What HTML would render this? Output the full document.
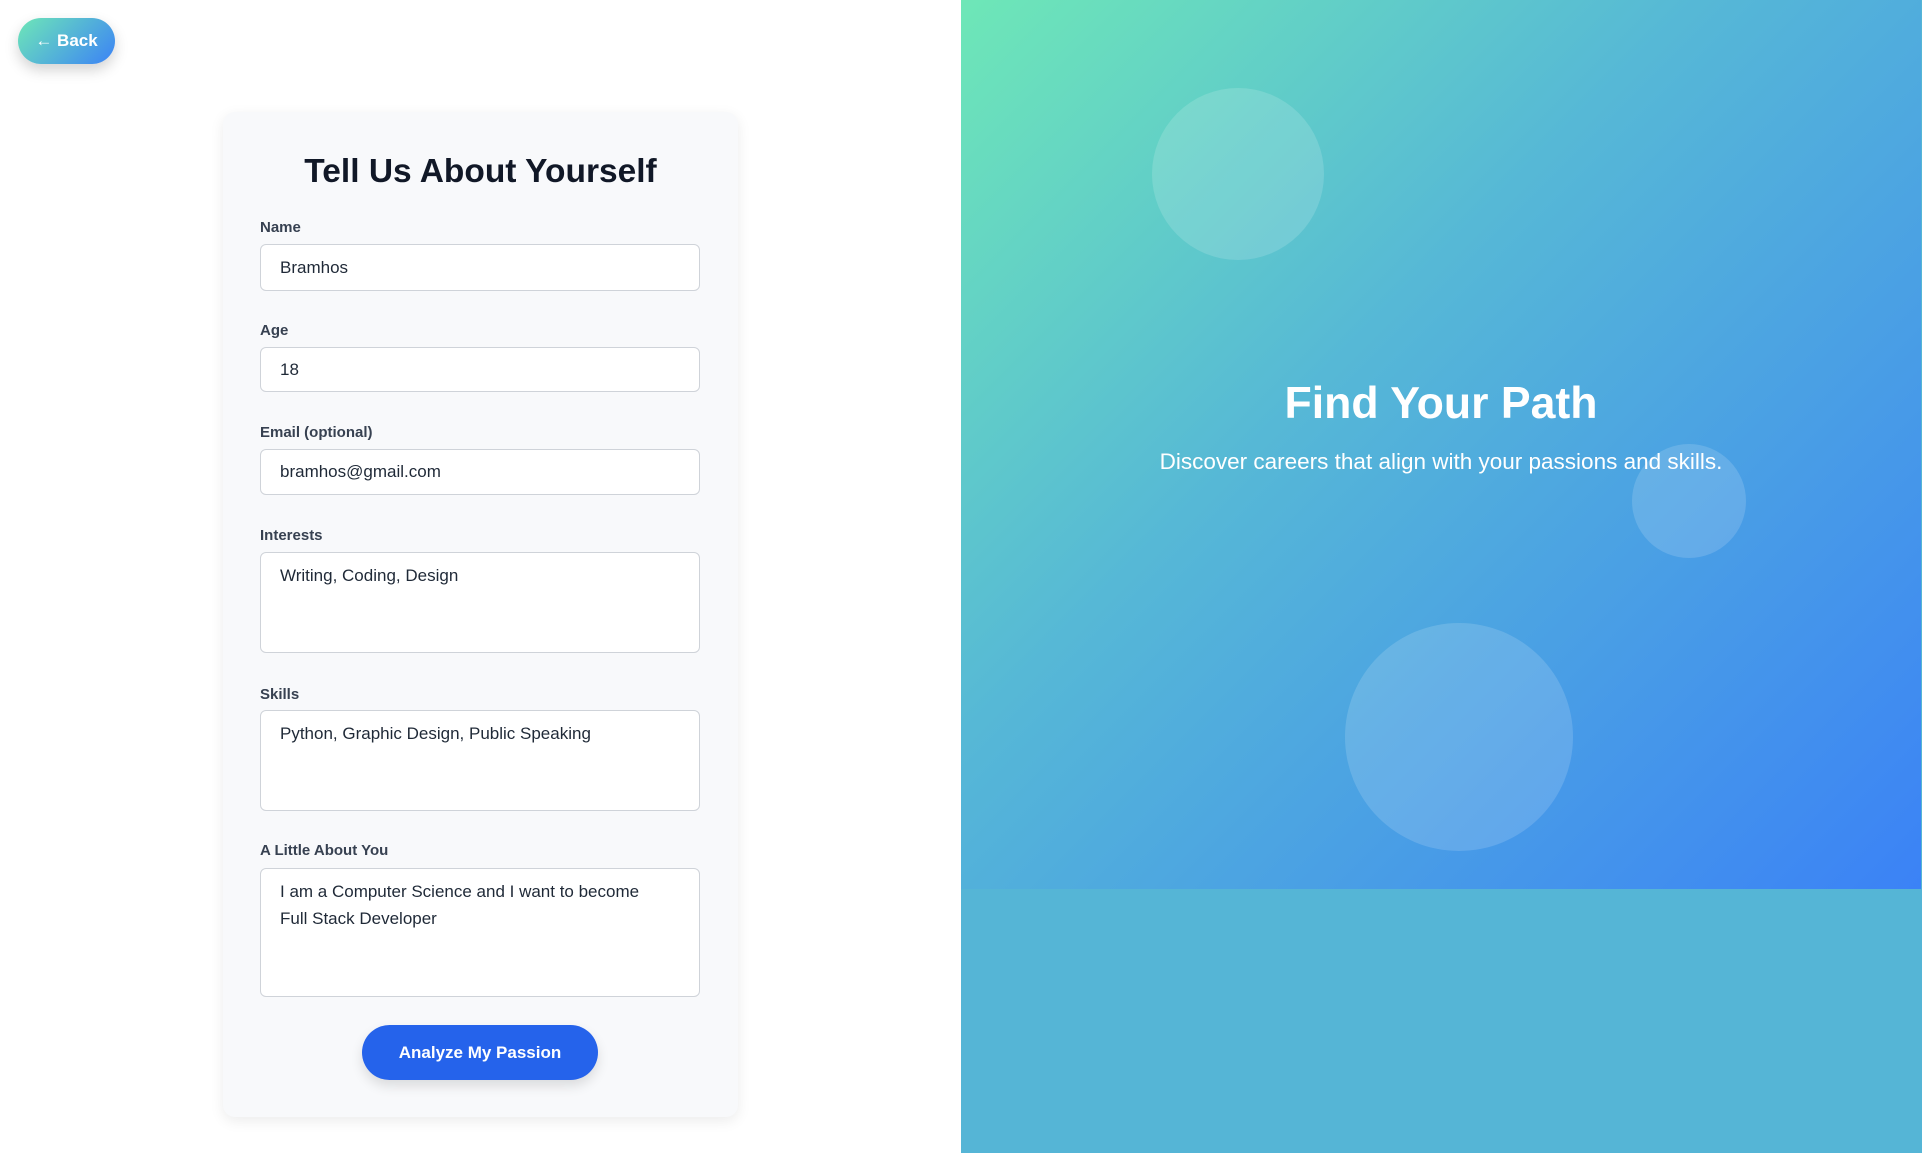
<!DOCTYPE html>
<html><head><meta charset="utf-8"><style>
*{box-sizing:border-box;margin:0;padding:0}
body{width:1922px;height:1153px;position:relative;overflow:hidden;background:#fff;font-family:"Liberation Sans",sans-serif}
.back{position:absolute;left:18px;top:18px;width:97px;height:46px;border-radius:23px;background:linear-gradient(135deg,#6ee7b7,#3b82f6);color:#fff;font-weight:bold;font-size:17px;line-height:46px;text-align:center;box-shadow:0 6px 14px rgba(0,0,0,.18)}
.card{position:absolute;left:223px;top:112px;width:515px;height:1005px;background:#f8f9fb;border-radius:12px;box-shadow:0 4px 14px rgba(0,0,0,.08)}
h1{position:absolute;left:0;top:153px;text-align:center;font-size:33.5px;font-weight:bold;color:#111827}
.lab{position:absolute;left:260px;font-size:15px;font-weight:bold;color:#374151}
.in{position:absolute;left:260px;width:440px;background:#fff;border:1px solid #cfd3d9;border-radius:6px;font-size:17px;color:#1f2937;padding:0 19px;line-height:27px;white-space:nowrap}
.btn{position:absolute;left:362px;top:1025px;width:236px;height:55px;border-radius:28px;background:#2563eb;color:#fff;font-weight:bold;font-size:17px;line-height:55px;text-align:center;box-shadow:0 6px 12px rgba(0,0,0,.12)}
.right{position:absolute;left:961px;top:0;width:961px;height:1153px;background:#55b5d6}
.grad{position:absolute;left:0;top:0;width:960px;height:889px;background:linear-gradient(135deg,#6ee7b7 0%,#56b8d6 40%,#3b82f6 100%)}
.c{position:absolute;border-radius:50%;background:rgba(255,255,255,.15)}
.t1{position:absolute;left:0;width:960px;top:379px;text-align:center;color:#fff;font-weight:bold;font-size:44.6px}
.t2{position:absolute;left:0;width:960px;top:449px;text-align:center;color:#fff;font-size:22.5px}
</style></head><body>
<div class="back">← Back</div>
<div class="card"></div>
<h1 style="width:961px">Tell Us About Yourself</h1>
<div class="lab" style="top:219px">Name</div>
<div class="in" style="top:244px;height:47px;line-height:45px">Bramhos</div>
<div class="lab" style="top:322px">Age</div>
<div class="in" style="top:347px;height:45px;line-height:43px">18</div>
<div class="lab" style="top:424px">Email (optional)</div>
<div class="in" style="top:449px;height:46px;line-height:44px">bramhos@gmail.com</div>
<div class="lab" style="top:527px">Interests</div>
<div class="in" style="top:552px;height:101px;padding-top:9px">Writing, Coding, Design</div>
<div class="lab" style="top:686px">Skills</div>
<div class="in" style="top:710px;height:101px;padding-top:9px">Python, Graphic Design, Public Speaking</div>
<div class="lab" style="top:842px">A Little About You</div>
<div class="in" style="top:868px;height:129px;padding-top:9px">I am a Computer Science and I want to become<br>Full Stack Developer</div>
<div class="btn">Analyze My Passion</div>
<div class="right"><div class="grad">
<div class="c" style="left:191px;top:88px;width:172px;height:172px"></div>
<div class="c" style="left:671px;top:444px;width:114px;height:114px"></div>
<div class="c" style="left:384px;top:623px;width:228px;height:228px"></div>
<div class="t1">Find Your Path</div>
<div class="t2">Discover careers that align with your passions and skills.</div>
</div></div>
</body></html>
